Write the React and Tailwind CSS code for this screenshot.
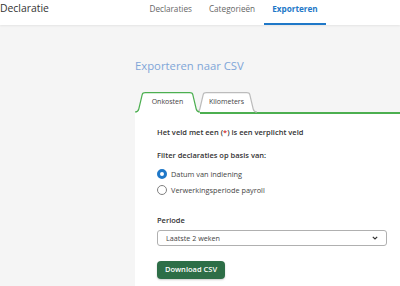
import React from "react";

function Tab({ label, active, width, className = "" }) {
  const w = width;
  const H = 20;
  const outline = `M0 ${H} C2.5 ${H} 3.3 ${H - 1} 3.8 ${H - 3} L7.2 2.6 C7.6 1 8.6 0.7 10.4 0.7 L${w - 11.4} 0.7 C${w - 9.6} 0.7 ${w - 8.6} 1 ${w - 8.2} 2.6 L${w - 4.8} ${H - 3} C${w - 4.3} ${H - 1} ${w - 3.5} ${H} ${w - 1} ${H}`;
  return (
    <div className={`relative flex h-[20px] items-center justify-center ${active ? "z-10" : "z-0"} ${className}`} style={{ width: w }}>
      <svg className="absolute left-0 top-0 overflow-visible" width={w} height={H + 2} viewBox={`0 0 ${w} ${H + 2}`} fill="none">
        {active ? <path d={`${outline} L${w - 1} ${H + 2} L0 ${H + 2} Z`} fill="#ffffff" /> : <path d={`${outline} Z`} fill="#ffffff" />}
        <path d={outline} stroke={active ? "#4caf50" : "#bcbcbc"} strokeWidth="1.2" />
      </svg>
      <span className="relative pr-[1px] text-[7px] leading-[10px] text-[#444]">{label}</span>
    </div>
  );
}

export default function App() {
  return (
    <div className="flex h-[286px] w-[400px] flex-col overflow-hidden bg-[#f5f5f5] font-['Open_Sans',sans-serif]">
      <header className="relative z-20 flex h-[25px] shrink-0 items-stretch bg-white shadow-[0_1px_2px_rgba(0,0,0,0.07)]">
        <div className="flex items-center pb-[7px] text-[10.4px] text-[#333]">Declaratie</div>
        <nav className="ml-[92px] flex items-stretch text-[8.2px] text-[#666]">
          <div className="flex items-center px-[8.5px] pb-[7px]">Declaraties</div>
          <div className="flex items-center px-[8.5px] pb-[7px]">Categorieën</div>
          <div className="flex items-center border-b-[2.5px] border-[#1f78c8] px-[8.5px] pb-[4.5px] font-bold text-[#1f78c8]">Exporteren</div>
        </nav>
      </header>
      <main className="flex flex-1 flex-col pl-[135px] pt-[33px]">
        <h1 className="text-[11.3px] leading-[16px] text-[#7fa6d8]">Exporteren naar CSV</h1>
        <div className="mt-[18px] flex">
          <Tab label="Onkosten" active width={66} />
          <Tab label="Kilometers" width={62} className="ml-[-5px]" />
        </div>
        <div className="flex-1 border-t-2 border-[#4caf50] bg-white pl-[22px] pt-[13px] text-[#333]">
          <p className="text-[7.5px] font-semibold leading-[10px]">
            Het veld met een (<span className="text-[#d32f2f]">*</span>) is een verplicht veld
          </p>
          <p className="mt-[13px] text-[7.5px] font-semibold leading-[10px]">Filter declaraties op basis van:</p>
          <div className="mt-[9px] flex h-[10px] items-center gap-[4.5px]">
            <span className="h-[9.5px] w-[9.5px] rounded-full border-[3px] border-[#1f78c8] bg-white"></span>
            <span className="text-[7.35px] leading-[10px] text-[#444]">Datum van indiening</span>
          </div>
          <div className="mt-[6px] flex h-[10px] items-center gap-[4.5px]">
            <span className="h-[9.5px] w-[9.5px] rounded-full border border-[#808080] bg-white"></span>
            <span className="text-[7.35px] leading-[10px] text-[#444]">Verwerkingsperiode payroll</span>
          </div>
          <p className="mt-[20px] text-[7.5px] font-semibold leading-[10px]">Periode</p>
          <div className="mt-[5px] flex h-[16px] w-[230px] items-center justify-between rounded-[3px] border border-[#b0b0b0] pl-[8px] pr-[8px] text-[7.2px] text-[#444]">
            <span>Laatste 2 weken</span>
            <svg width="6" height="4" viewBox="0 0 6 4" fill="none">
              <path d="M0.8 0.8 L3 3 L5.2 0.8" stroke="#333" strokeWidth="1.2" />
            </svg>
          </div>
          <button className="mt-[15px] flex h-[18px] w-[68px] items-center justify-center rounded-[4px] bg-[#2d6e47] text-[7.5px] font-semibold text-white shadow-[0_1px_2px_rgba(0,0,0,0.2)]">
            Download CSV
          </button>
        </div>
      </main>
    </div>
  );
}
